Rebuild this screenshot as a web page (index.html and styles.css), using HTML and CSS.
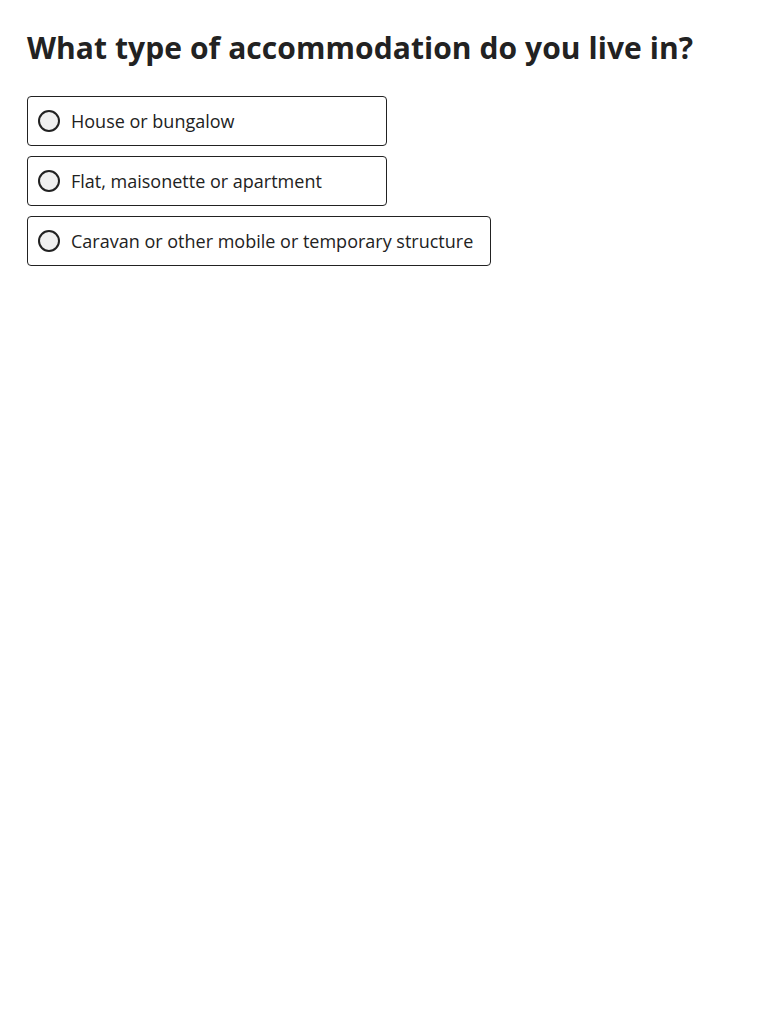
FILE: index.html
```html
<!DOCTYPE html>
<html lang="en">
<head>
<meta charset="utf-8">
<title>Accommodation</title>
<link rel="stylesheet" href="styles.css">
</head>
<body>
<main class="page">
  <h1 class="title">What type of accommodation do you live in?</h1>
  <div class="options">
    <label class="option"><span class="radio"></span><span class="label">House or bungalow</span></label>
    <label class="option"><span class="radio"></span><span class="label">Flat, maisonette or apartment</span></label>
    <label class="option"><span class="radio"></span><span class="label">Caravan or other mobile or temporary structure</span></label>
  </div>
</main>
</body>
</html>
```

FILE: styles.css
```css
html, body {
  margin: 0;
  padding: 0;
  background: #fff;
}
body {
  font-family: "Open Sans", "Noto Sans", sans-serif;
  color: #222;
}
.page {
  padding: 26px 27px;
}
.title {
  margin: 0 0 26px;
  font-size: 30px;
  font-weight: 700;
  line-height: 44px;
  letter-spacing: 0.07px;
  color: #222;
}
.options {
  display: flex;
  flex-direction: column;
  align-items: flex-start;
  gap: 10px;
}
.option {
  display: flex;
  align-items: center;
  gap: 11px;
  min-width: 331px;
  padding: 11px 17px 11px 10px;
  border: 1px solid #222;
  border-radius: 4px;
  font-size: 18px;
  line-height: 26px;
}
.radio {
  box-sizing: border-box;
  width: 22px;
  height: 22px;
  border: 2px solid #222;
  border-radius: 50%;
  background: #f0f0f0;
  flex: none;
}
.label {
  white-space: nowrap;
}
```
